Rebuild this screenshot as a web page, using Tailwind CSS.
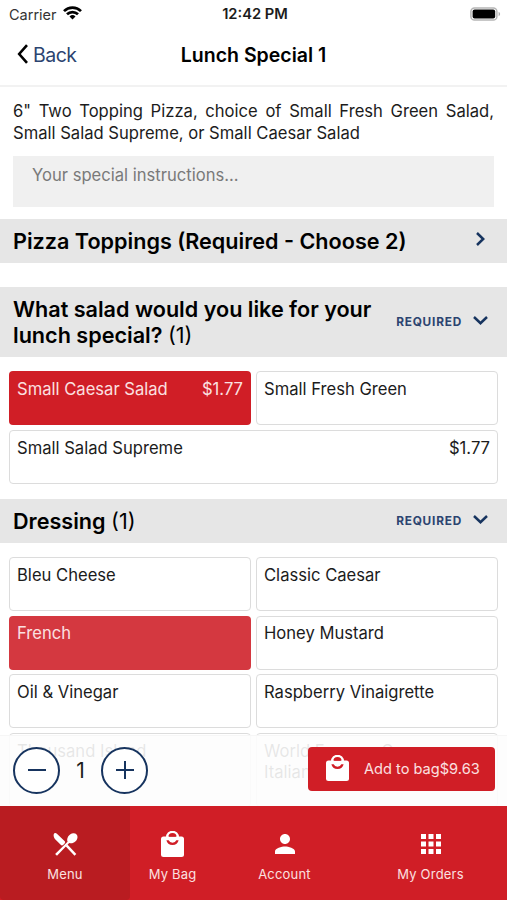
<!DOCTYPE html>
<html lang="en">
<head>
    <meta charset="UTF-8" />
    <meta name="viewport" content="width=device-width, initial-scale=1.0" />
    <title>Lunch Special 1</title>
    <script src="https://cdn.jsdelivr.net/npm/@tailwindcss/browser@4"></script>
</head>
<body class="relative flex h-screen flex-col overflow-hidden bg-white font-['Inter',sans-serif] text-[16.6px] leading-[22px] text-[#1c1c1c]">
    <!-- Status bar -->
    <div class="grid h-[27px] shrink-0 grid-cols-3 items-center pr-[6px] pl-[9px] text-[14.5px] leading-[27px]">
        <div class="flex items-center gap-[6px]">
            <span class="text-[#333]">Carrier</span>
            <svg class="mb-[2px] h-[14px] w-[19px]" viewBox="0 0 19 14" fill="none" stroke="#000" stroke-width="2.7">
                <path d="M1 5.1a12.2 12.2 0 0 1 17 0" />
                <path d="M4 8.3a7.8 7.8 0 0 1 11 0" />
                <path d="M9.5 13.6l-3-3.1a4.3 4.3 0 0 1 6 0z" fill="#000" stroke="none" />
            </svg>
        </div>
        <div class="pt-px text-center text-[14.7px] font-semibold whitespace-nowrap">12:42 PM</div>
        <div class="flex justify-end">
            <svg class="h-[14px] w-[31px]" viewBox="0 0 31 14">
                <rect x=".9" y=".9" width="26" height="12.2" rx="3.6" fill="#fff" stroke="#b5b5b5" stroke-width="1.5" />
                <rect x="2.6" y="2.4" width="22.6" height="9.2" rx="2" fill="#000" />
                <path d="M28.6 4.8c2 .8 2 3.6 0 4.4z" fill="#aaa" />
            </svg>
        </div>
    </div>

    <!-- Header -->
    <header class="grid h-[60px] shrink-0 grid-cols-[1fr_auto_1fr] items-center border-b-2 border-[#f2f2f2] pb-[3px]">
        <a href="#" class="flex items-center gap-[5px] pl-[17px] text-[19.5px] tracking-[-0.5px] text-[#2c4470]">
            <svg class="mb-[2px] h-[20px] w-[11px]" viewBox="0 0 11 20" fill="none" stroke="#000" stroke-width="2.6">
                <path d="M10 1.2L2.2 10l7.8 8.8" />
            </svg>
            Back
        </a>
        <h1 class="text-[19.5px] font-semibold text-black">Lunch Special 1</h1>
    </header>

    <!-- Item details -->
    <main class="flex-1">
        <div class="px-[13px] pt-[13px]">
            <p class="text-justify">6" Two Topping Pizza, choice of Small Fresh Green Salad, Small Salad Supreme, or Small Caesar Salad</p>
            <div class="mt-[12px] h-[51px] bg-[#f0f0f0] px-[19px] pt-2 text-[#7a7a7a]">Your special instructions...</div>
        </div>

        <div class="mt-[12px] flex h-[44px] items-center justify-between bg-[#e6e6e6] pr-[22px] pl-[13px]">
            <h2 class="text-[21.6px] font-semibold text-black">Pizza Toppings (Required - Choose 2)</h2>
            <svg class="mb-[5px] h-[14px] w-[9px]" viewBox="0 0 9 14" fill="none" stroke="#17345f" stroke-width="2.5">
                <path d="M1 1l6.2 6L1 13" />
            </svg>
        </div>

        <div class="mt-[24px] flex h-[70px] items-center justify-between bg-[#e6e6e6] pr-[19px] pl-[13px]">
            <h2 class="text-[21.6px] leading-[26px] font-semibold whitespace-nowrap text-black">What salad would you like for your<br />lunch special? <span class="font-normal">(1)</span></h2>
            <div class="flex items-center gap-[11px]">
                <span class="text-[11.8px] font-bold tracking-[0.8px] text-[#2c4470]">REQUIRED</span>
                <svg class="mb-[4px] h-[9px] w-[15px]" viewBox="0 0 15 9" fill="none" stroke="#17345f" stroke-width="2.5">
                    <path d="M1 1l6.5 6.2L14 1" />
                </svg>
            </div>
        </div>
        <div class="mt-[14px] grid grid-cols-2 gap-x-[5px] gap-y-[5px] px-[9px]">
            <div class="flex h-[54px] justify-between rounded-[4px] bg-[#d01e26] px-2 pt-[7px] text-[#fbe0e0]"><span>Small Caesar Salad</span><span>$1.77</span></div>
            <div class="h-[54px] rounded-[4px] border border-[#dcdcdc] px-[7px] pt-[6px]">Small Fresh Green</div>
            <div class="col-span-2 flex h-[54px] justify-between rounded-[4px] border border-[#dcdcdc] px-[7px] pt-[6px]"><span>Small Salad Supreme</span><span>$1.77</span></div>
        </div>

        <div class="mt-[15px] flex h-[44px] items-center justify-between bg-[#e6e6e6] pr-[19px] pl-[13px]">
            <h2 class="text-[21.6px] font-semibold text-black">Dressing <span class="font-normal">(1)</span></h2>
            <div class="flex items-center gap-[11px]">
                <span class="text-[11.8px] font-bold tracking-[0.8px] text-[#2c4470]">REQUIRED</span>
                <svg class="mb-[4px] h-[9px] w-[15px]" viewBox="0 0 15 9" fill="none" stroke="#17345f" stroke-width="2.5">
                    <path d="M1 1l6.5 6.2L14 1" />
                </svg>
            </div>
        </div>
        <div class="mt-[14px] grid grid-cols-2 gap-x-[5px] gap-y-[4.6px] px-[9px] leading-[21px]">
            <div class="h-[54px] rounded-[4px] border border-[#dcdcdc] px-[7px] pt-[7px]">Bleu Cheese</div>
            <div class="h-[54px] rounded-[4px] border border-[#dcdcdc] px-[7px] pt-[7px]">Classic Caesar</div>
            <div class="h-[54px] rounded-[4px] bg-[#d43840] px-2 pt-[7.5px] text-[#fbe0e0]">French</div>
            <div class="h-[54px] rounded-[4px] border border-[#dcdcdc] px-[7px] pt-[6.5px]">Honey Mustard</div>
            <div class="h-[54px] rounded-[4px] border border-[#dcdcdc] px-[7px] pt-[7px]">Oil &amp; Vinegar</div>
            <div class="h-[54px] rounded-[4px] border border-[#dcdcdc] px-[7px] pt-[7px]">Raspberry Vinaigrette</div>
            <div class="h-[74px] rounded-[4px] border border-[#dcdcdc] px-[7px] pt-[7px]">Thousand Island</div>
            <div class="h-[74px] rounded-[4px] border border-[#dcdcdc] px-[7px] pt-[7px]">World Famous Creamy<br />Italian</div>
        </div>
    </main>

    <div class="absolute inset-x-0 bottom-0">
        <div class="flex h-[71px] items-center border-t border-[#f6f6f6] bg-[#fdfdfd]/90 pr-[12px] pb-[2px] pl-[13px]">
            <button class="flex size-[47px] items-center justify-center rounded-full border-2 border-[#17345f] bg-white">
                <svg class="size-[18px]" viewBox="0 0 18 18" stroke="#17345f" stroke-width="2"><path d="M0 9h18" /></svg>
            </button>
            <span class="w-[41px] pt-[2px] text-center text-[21px]">1</span>
            <button class="flex size-[47px] items-center justify-center rounded-full border-2 border-[#17345f] bg-white">
                <svg class="size-[18px]" viewBox="0 0 18 18" stroke="#17345f" stroke-width="2"><path d="M0 9h18M9 0v18" /></svg>
            </button>
            <button class="mb-[3px] ml-auto flex h-[44px] w-[187px] items-center rounded-[4px] bg-[#d01e26] pl-[18px] text-[14.6px] whitespace-nowrap text-[#fbe0e0]">
                <svg class="mr-[15px] mb-[2px] h-[26px] w-[23px] shrink-0" viewBox="0 0 23 26">
                    <rect y="5.5" width="23" height="20.5" rx="2.5" fill="#fff" />
                    <path d="M6.2 7v-.8a5.3 5.3 0 0 1 10.6 0V7" fill="none" stroke="#fff" stroke-width="2.4" />
                    <path d="M7.8 5.8a3.8 3.3 0 0 1 7.4 0zM5.4 9.2a6.2 5.8 0 0 0 12.2 0h-2.3a4 3.6 0 0 1-7.6 0z" fill="#d01e26" />
                </svg>
                Add to bag$9.63
            </button>
        </div>
        <nav class="flex h-[94px] bg-[#d01e26] text-[13px] leading-[18px] tracking-[0.2px] text-[#fbe0e0]">
            <a href="#" class="flex w-[130px] flex-col items-center rounded-b-[4px] bg-[#b91c21] pt-[26px]">
                <svg class="mb-[8px] h-[25px] w-[25px]" viewBox="0 0 25 25" fill="#fff">
                    <path d="M1.2 1.6c.8-.8 1.9-.5 2.7.2l7.6 7.3c.8.8.8 1.6.1 2.3l-1.5 1.5c-.7.7-1.7.6-2.4-.1L1.9 7C.6 5.6.1 2.7 1.2 1.6z" />
                    <path d="M14.6 9.7c-1.5-3.2 1.5-8.2 5.7-8.4 2.8-.1 4.4 1.6 4.2 4-.3 4.2-4.8 7.1-8.3 5.7L4 23.8l-1.9-1.9z" />
                    <path d="M12.6 14.3l1.8-1.8 8.9 9.4-1.8 1.9z" />
                </svg>
                Menu
            </a>
            <a href="#" class="flex w-[85px] flex-col items-center pt-[25px]">
                <svg class="mb-[8px] h-[26px] w-[23px]" viewBox="0 0 23 26">
                    <rect y="5.5" width="23" height="20.5" rx="2.5" fill="#fff" />
                    <path d="M6.2 7v-.8a5.3 5.3 0 0 1 10.6 0V7" fill="none" stroke="#fff" stroke-width="2.4" />
                    <path d="M7.8 5.8a3.8 3.3 0 0 1 7.4 0zM5.4 9.2a6.2 5.8 0 0 0 12.2 0h-2.3a4 3.6 0 0 1-7.6 0z" fill="#d01e26" />
                </svg>
                My Bag
            </a>
            <a href="#" class="flex w-[139px] flex-col items-center pt-[28px]">
                <svg class="mb-[11px] h-[20px] w-[20px]" viewBox="4 4 16 16" fill="#fff">
                    <path d="M12 12c2.21 0 4-1.79 4-4s-1.79-4-4-4-4 1.79-4 4 1.79 4 4 4zm0 2c-2.67 0-8 1.34-8 4v2h16v-2c0-2.66-5.33-4-8-4z" />
                </svg>
                Account
            </a>
            <a href="#" class="flex flex-1 flex-col items-center pt-[28px]">
                <svg class="mb-[11px] h-[20px] w-[20px]" viewBox="4 4 16 16" fill="#fff">
                    <path d="M4 8h4V4H4v4zm6 12h4v-4h-4v4zm-6 0h4v-4H4v4zm0-6h4v-4H4v4zm6 0h4v-4h-4v4zm6-10v4h4V4h-4zm-6 4h4V4h-4v4zm6 6h4v-4h-4v4zm0 6h4v-4h-4v4z" />
                </svg>
                My Orders
            </a>
        </nav>
    </div>
</body>
</html>
